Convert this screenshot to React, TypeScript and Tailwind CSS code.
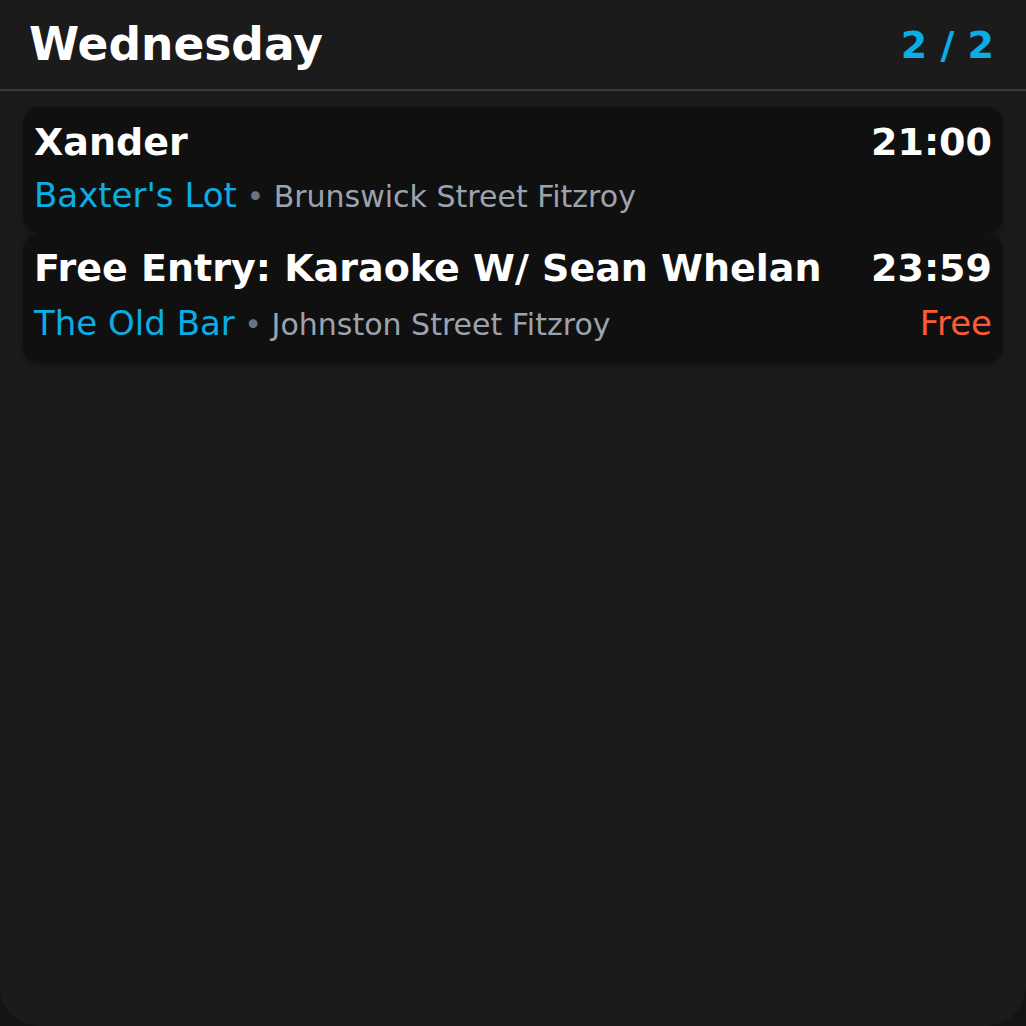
import React from "react";

type Ev = { title: string; venue: string; street: string; time: string; price?: string };

const events: Ev[] = [
  { title: "Xander", venue: "Baxter's Lot", street: "Brunswick Street Fitzroy", time: "21:00" },
  { title: "Free Entry: Karaoke W/ Sean Whelan", venue: "The Old Bar", street: "Johnston Street Fitzroy", time: "23:59", price: "Free" },
];

export default function App() {
  return (
    <div className="w-[1026px] h-[1026px] bg-[#141414] font-['DejaVu_Sans',sans-serif]">
      <div className="h-full bg-[#1b1b1b] rounded-b-[40px] flex flex-col">
        <div className="flex items-center justify-between h-[91px] pl-[29px] pr-[32px] border-b-2 border-[#363c48]">
          <div className="text-[45.5px] font-bold text-white leading-none">Wednesday</div>
          <div className="text-[38px] font-bold text-[#0aaee4] leading-none">2 / 2</div>
        </div>
        <div className="flex flex-col px-[23px] pt-[16px] gap-[1px]">
          {events.map((e, i) => (
            <div
              key={i}
              className={
                e.price
                  ? "rounded-[16px] bg-[#101010] px-[11px] pt-[12px] pb-[18px] flex justify-between shadow-[0_3px_10px_rgba(0,0,0,0.25)]"
                  : "rounded-[16px] bg-[#101010] px-[11px] pt-[13px] pb-[16px] flex justify-between shadow-[0_3px_10px_rgba(0,0,0,0.25)]"
              }
            >
              <div className={e.price ? "flex flex-col gap-[13px] min-w-0" : "flex flex-col gap-[11px] min-w-0"}>
                <div className="text-[38px] font-bold text-white leading-[44px] whitespace-nowrap">{e.title}</div>
                <div className="text-[34px] leading-[40px] whitespace-nowrap">
                  <span className="text-[#0aaee4]">{e.venue}</span>
                  <span className="text-[30px] text-[#6b7280]"> • </span>
                  <span className="text-[30px] text-[#9ca3af]">{e.street}</span>
                </div>
              </div>
              <div className={e.price ? "flex flex-col items-end gap-[13px]" : "flex flex-col items-end gap-[11px]"}>
                <div className="text-[38px] font-bold text-white leading-[44px]">{e.time}</div>
                {e.price && <div className="text-[34px] leading-[40px] text-[#ff5a36]">{e.price}</div>}
              </div>
            </div>
          ))}
        </div>
      </div>
    </div>
  );
}
